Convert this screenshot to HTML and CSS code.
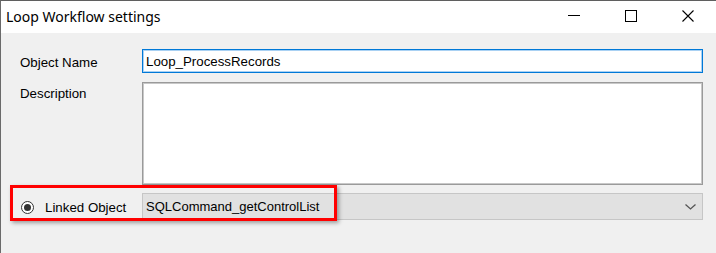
FILE: index.html
```html
<!DOCTYPE html>
<html>
<head>
<meta charset="utf-8">
<link rel="stylesheet" href="styles.css">
</head>
<body>
<div class="window">
  <div class="titlebar">
    <div class="title">Loop Workflow settings</div>
    <div class="controls">
      <div class="ctl"><svg width="12" height="12" viewBox="0 0 12 12"><path d="M0 5.5H12" stroke="#000" stroke-width="1"/></svg></div>
      <div class="ctl"><svg width="12" height="12" viewBox="0 0 12 12"><rect x="0.5" y="0.5" width="11" height="11" fill="none" stroke="#000" stroke-width="1"/></svg></div>
      <div class="ctl"><svg width="12" height="12" viewBox="0 0 12 12"><path d="M0.5 0.5L11.5 11.5M11.5 0.5L0.5 11.5" stroke="#000" stroke-width="1.1"/></svg></div>
    </div>
  </div>
  <div class="content">
    <div class="label row1">Object Name</div>
    <div class="textbox focused">Loop_ProcessRecords</div>
    <div class="label row2">Description</div>
    <div class="textarea"></div>
    <div class="label row3">
      <span class="radio"><span class="dot"></span></span>
      <span>Linked Object</span>
    </div>
    <div class="combo">
      <span class="combo-text">SQLCommand_getControlList</span>
      <svg class="chev" width="11" height="6" viewBox="0 0 11 6"><path d="M0.5 0.5L5.5 5L10.5 0.5" fill="none" stroke="#555" stroke-width="1.3"/></svg>
    </div>
  </div>
  <div class="highlight"></div>
</div>
</body>
</html>
```

FILE: styles.css
```css
html, body {
  margin: 0;
  padding: 0;
  background: #f0f0f0;
}
.window {
  position: relative;
  width: 716px;
  height: 253px;
  box-sizing: border-box;
  border-top: 1px solid #5f5f5f;
  border-left: 1px solid #6a6a6a;
  background: #f0f0f0;
  overflow: hidden;
}
.titlebar {
  height: 32px;
  background: #ffffff;
  display: flex;
  align-items: center;
  justify-content: space-between;
}
.title {
  font-family: "Noto Sans", sans-serif;
  font-size: 14px;
  color: #000;
  padding-left: 5px;
  padding-bottom: 1px;
}
.controls {
  display: flex;
  height: 32px;
}
.ctl {
  width: 57px;
  height: 32px;
  display: flex;
  align-items: center;
  justify-content: center;
  padding-bottom: 2px;
  box-sizing: border-box;
}
.content {
  display: grid;
  grid-template-columns: 141px 561px;
  grid-template-rows: 24px 103px 26px;
  row-gap: 9px;
  padding-top: 16px;
  font-family: "Liberation Sans", Arial, sans-serif;
  font-size: 13.3px;
  color: #000;
}
.content .row3 { margin-top: -1px; }
.label {
  padding-left: 19px;
}
.row1 {
  display: flex;
  align-items: center;
  padding-top: 2px;
}
.row2 {
  padding-top: 4px;
}
.row3 {
  display: flex;
  align-items: center;
  padding-left: 20px;
  gap: 11px;
  padding-top: 2px;
}
.textbox {
  box-sizing: border-box;
  background: #fff;
  border: 1px solid #0078d7;
  box-shadow: inset 0 0 0 1px #a9d1f3;
  display: flex;
  align-items: center;
  padding-left: 3px;
}
.textarea {
  box-sizing: border-box;
  background: #fff;
  border: 1px solid #9a9a9a;
  box-shadow: inset 1px 1px 0 #c8c8c8, inset -1px -1px 0 #c8c8c8;
}
.combo {
  box-sizing: border-box;
  margin-top: -1px;
  background: #e1e1e1;
  border: 1px solid #c6c6c6;
  display: flex;
  align-items: center;
  justify-content: space-between;
  padding-left: 3px;
  padding-right: 6px;
}
.combo-text {
  font-size: 13px;
}
.radio {
  width: 11px;
  height: 11px;
  border: 1px solid #333;
  border-radius: 50%;
  display: flex;
  align-items: center;
  justify-content: center;
  background: #fff;
}
.dot {
  width: 7px;
  height: 7px;
  border-radius: 50%;
  background: #333;
}
.highlight {
  position: absolute;
  left: 9px;
  top: 184px;
  width: 327px;
  height: 36px;
  box-sizing: border-box;
  border: 3px solid #ff0000;
  box-shadow: 2px 2px 4px rgba(0, 0, 0, 0.35);
}
```
